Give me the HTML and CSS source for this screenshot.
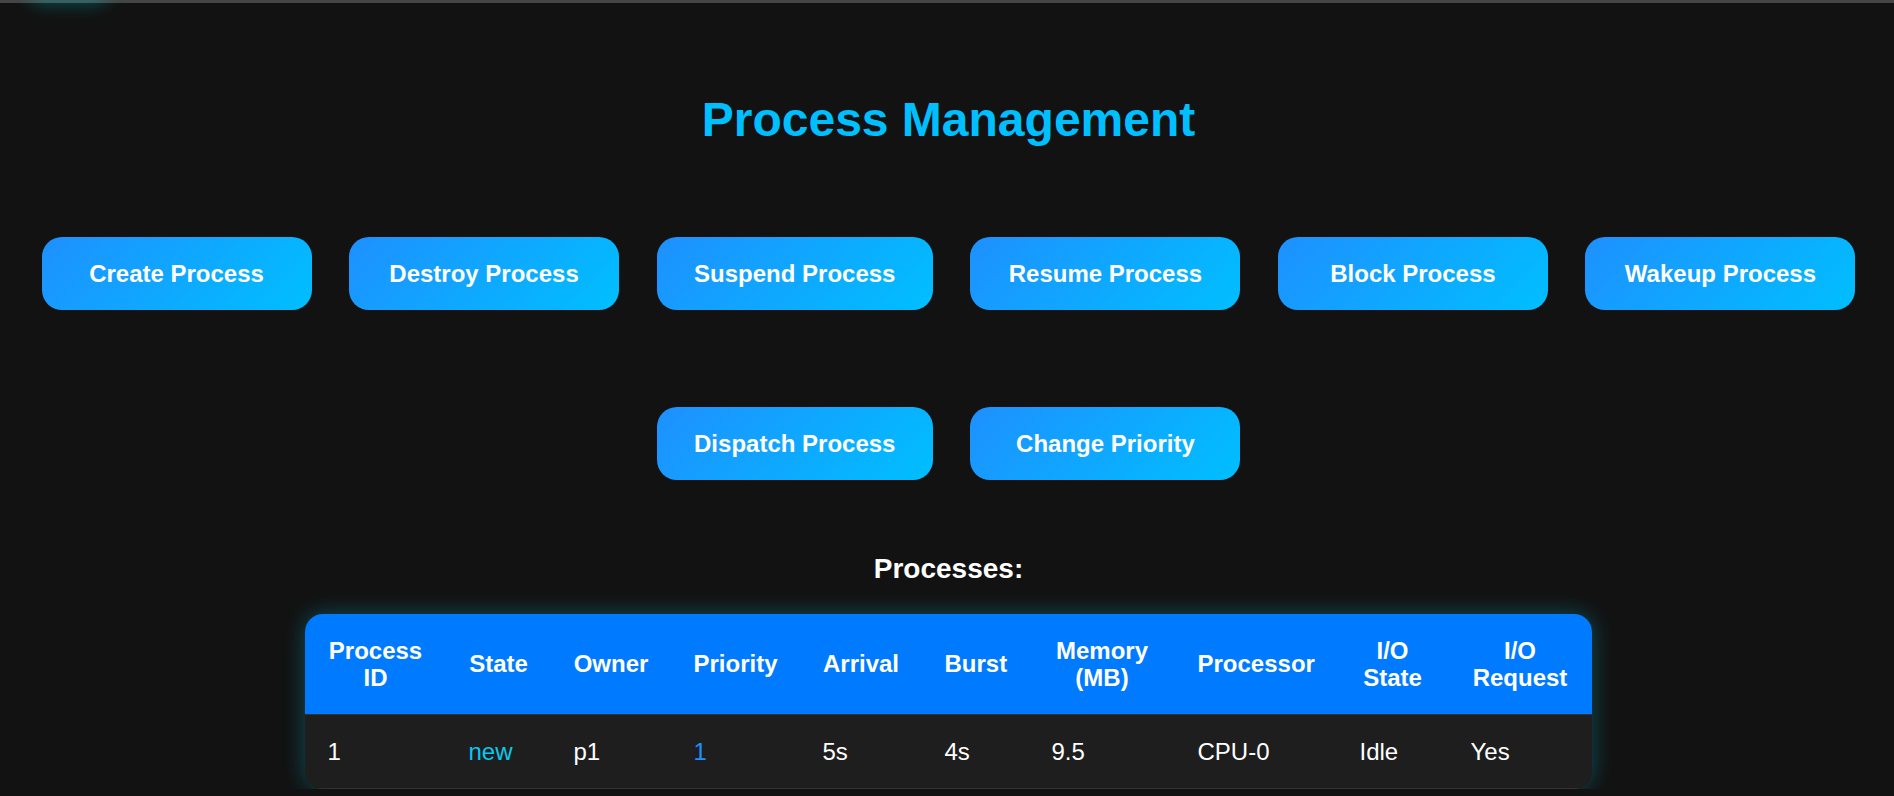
FILE: index.html
```html
<!DOCTYPE html>
<html lang="en">
<head>
<meta charset="utf-8">
<title>Process Management</title>
<link rel="stylesheet" href="styles.css">
</head>
<body>
<div class="topbar"><span class="topglow"></span></div>
<main class="page">
  <h1 class="title">Process Management</h1>
  <div class="actions">
    <button class="btn">Create Process</button>
    <button class="btn">Destroy Process</button>
    <button class="btn">Suspend Process</button>
    <button class="btn">Resume Process</button>
    <button class="btn">Block Process</button>
    <button class="btn">Wakeup Process</button>
    <button class="btn">Dispatch Process</button>
    <button class="btn">Change Priority</button>
  </div>
  <h3 class="subtitle">Processes:</h3>
  <table class="ptable">
    <colgroup>
      <col class="c-id"><col class="c-state"><col class="c-owner"><col class="c-prio"><col class="c-arr">
      <col class="c-burst"><col class="c-mem"><col class="c-proc"><col class="c-ios"><col class="c-ior">
    </colgroup>
    <thead>
      <tr>
        <th>Process ID</th><th>State</th><th>Owner</th><th>Priority</th><th>Arrival</th>
        <th>Burst</th><th>Memory (MB)</th><th>Processor</th><th>I/O State</th><th>I/O Request</th>
      </tr>
    </thead>
    <tbody>
      <tr>
        <td>1</td><td class="st-new">new</td><td>p1</td><td class="prio">1</td><td>5s</td>
        <td>4s</td><td>9.5</td><td>CPU-0</td><td>Idle</td><td>Yes</td>
      </tr>
    </tbody>
  </table>
</main>
</body>
</html>
```
FILE: styles.css
```css
html, body {
  margin: 0;
  padding: 0;
  background: #121212;
  color: #ffffff;
  font-family: "Liberation Sans", Arial, sans-serif;
  overflow: hidden;
}

.topbar {
  height: 3px;
  background: #454545;
  position: relative;
}

.topglow {
  position: absolute;
  left: 32px;
  top: -22px;
  width: 74px;
  height: 22px;
  border-radius: 12px;
  box-shadow: 0 0 18px 4px rgba(0, 220, 230, 0.3);
}

.page {
  padding-left: 3px;
  display: flex;
  flex-direction: column;
  align-items: center;
}

.title {
  margin: 89px 0 0;
  font-size: 48px;
  line-height: 56px;
  font-weight: bold;
  color: #00bfff;
  text-align: center;
}

.actions {
  margin-top: 89px;
  width: 100%;
  display: flex;
  flex-wrap: wrap;
  justify-content: center;
  gap: 97px 37.5px;
}

.btn {
  box-sizing: border-box;
  min-width: 270px;
  height: 73px;
  padding: 0 37.5px;
  border: none;
  border-radius: 20px;
  background: linear-gradient(135deg, #1e90ff, #00bfff);
  color: #ffffff;
  font-family: "Liberation Sans", Arial, sans-serif;
  font-size: 24px;
  font-weight: bold;
  line-height: 27px;
  white-space: nowrap;
}

.subtitle {
  margin: 73px 0 0;
  font-size: 28px;
  line-height: 32px;
  font-weight: bold;
  color: #ffffff;
  text-align: center;
}

.ptable {
  margin-top: 29px;
  width: 1287px;
  table-layout: fixed;
  border-collapse: separate;
  border-spacing: 0;
  border-radius: 18px;
  overflow: hidden;
  background: #1e1e1e;
  box-shadow: 0 0 22px rgba(0, 225, 255, 0.3);
  font-size: 24px;
  line-height: 1.15;
}

.c-id { width: 141px; }
.c-state { width: 105px; }
.c-owner { width: 120px; }
.c-prio { width: 129px; }
.c-arr { width: 122px; }
.c-burst { width: 107px; }
.c-mem { width: 146px; }
.c-proc { width: 162px; }
.c-ios { width: 111px; }
.c-ior { width: 144px; }

.ptable th,
.ptable td {
  padding: 22.5px;
  border-bottom: 1px solid #333333;
  vertical-align: middle;
}

.ptable th {
  background: #007bff;
  color: #ffffff;
  font-weight: bold;
  text-align: center;
}

.ptable td {
  background: #1e1e1e;
  color: #ffffff;
  text-align: left;
}

.ptable .st-new {
  color: #0bc8ee;
}

.ptable .prio {
  color: #1e90ff;
}
```
